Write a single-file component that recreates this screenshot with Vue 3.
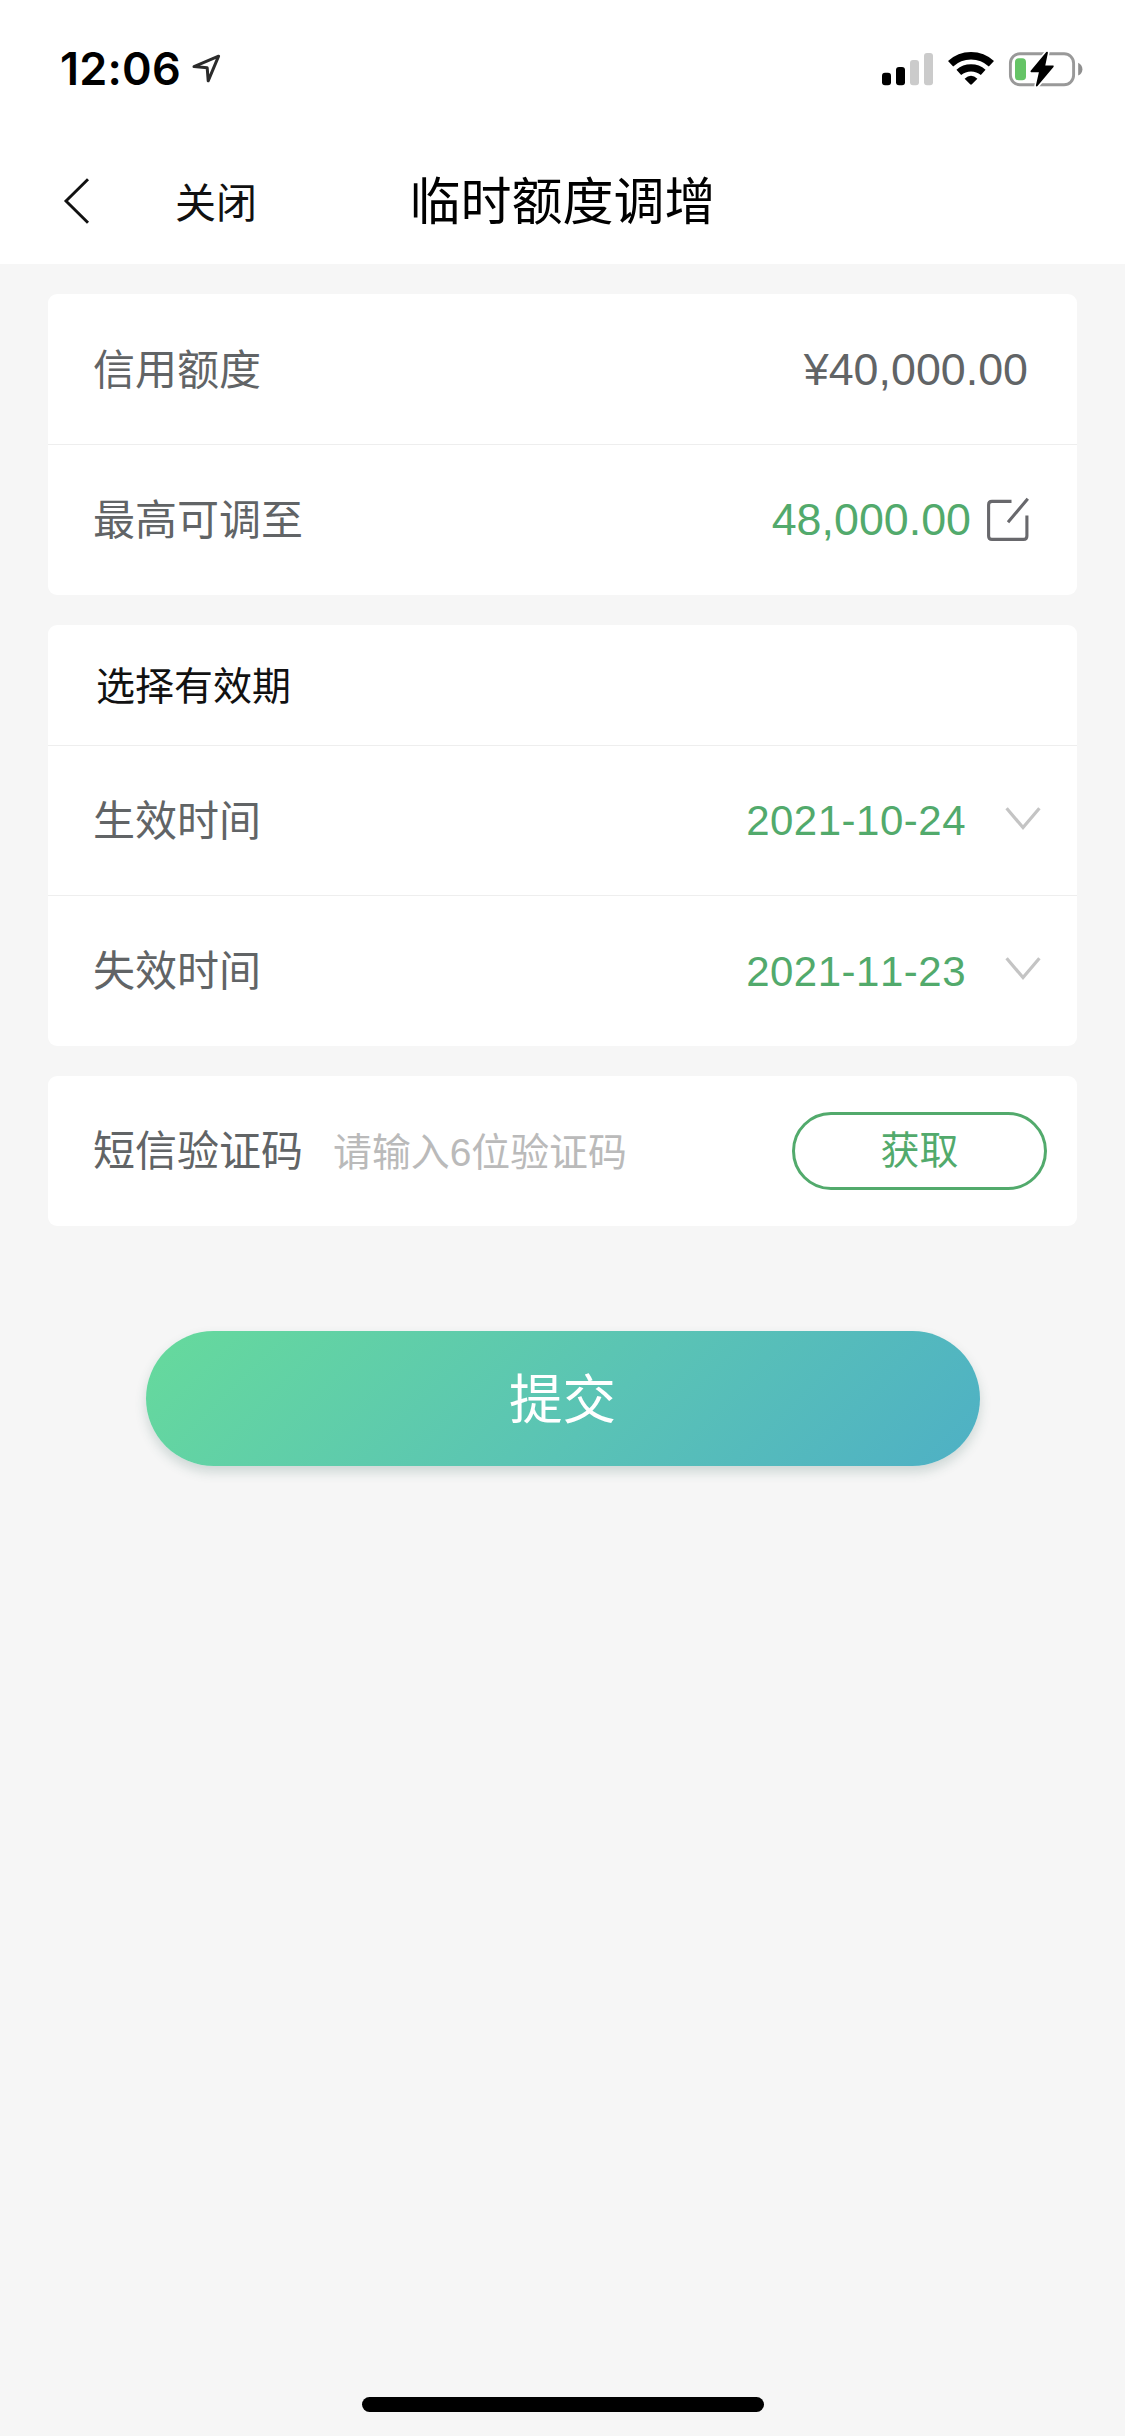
<script setup>
const limits = [
  { label: '信用额度', value: '¥40,000.00' },
  { label: '最高可调至', value: '48,000.00', editable: true },
]
const dates = [
  { label: '生效时间', value: '2021-10-24' },
  { label: '失效时间', value: '2021-11-23' },
]
</script>

<template>
  <div class="screen">
    <header class="top">
      <div class="status">
        <span class="clock">12:06</span>
        <svg class="location" width="30" height="30" viewBox="0 0 30 30">
          <path d="M2 12.6 L26.6 2.2 L16.2 26.8 L15.2 13.8 Z" fill="none" stroke="#2b2b2b" stroke-width="3" stroke-linejoin="round" />
        </svg>
        <svg class="indicators" width="205" height="38" viewBox="0 0 205 38">
          <rect x="2" y="22.7" width="9" height="12.6" rx="3" />
          <rect x="16" y="17" width="9" height="18.3" rx="3" />
          <rect x="30" y="10" width="9" height="25.3" rx="3" fill="#cbcbcb" />
          <rect x="44" y="3" width="9" height="32.3" rx="3" fill="#cbcbcb" />
          <path d="M70.6 13.8 A30 30 0 0 1 111.4 13.8" fill="none" stroke="#000" stroke-width="7.6" />
          <path d="M78.8 22.4 A18.6 18.6 0 0 1 103.2 22.4" fill="none" stroke="#000" stroke-width="7.2" />
          <path d="M84.6 28.8 Q91 22.8 97.4 28.8 L91.9 34.3 Q91 35.2 90.1 34.3 Z" />
          <rect x="130.4" y="3.8" width="63.2" height="31" rx="9.5" fill="none" stroke="#999" stroke-width="2.9" />
          <path d="M198.2 12.8 Q202.4 15 202.4 19.2 Q202.4 23.4 198.2 25.6 Z" fill="#8f8f8f" />
          <rect x="135" y="8.2" width="11" height="22" rx="3.8" fill="#65c466" />
          <path d="M167 2.5 L151.4 21.6 H160 L156.8 35.7 L172.8 16.3 H164.2 Z" stroke="#fff" stroke-width="5" stroke-linejoin="round" />
          <path d="M167 2.7 L151.4 21.4 H160 L156.8 35.5 L172.8 16.3 H164.2 Z" stroke="#000" stroke-width="1.8" stroke-linejoin="round" />
        </svg>
      </div>
      <nav class="nav">
        <svg class="back" width="27" height="48" viewBox="0 0 27 48">
          <path d="M25 2.2 L3 24 L25 45.8" fill="none" stroke="#111" stroke-width="2.9" />
        </svg>
        <span class="close">关闭</span>
        <h1 class="title">临时额度调增</h1>
      </nav>
    </header>

    <main class="content">
      <section class="card">
        <div v-for="item in limits" :key="item.label" class="row">
          <span class="label">{{ item.label }}</span>
          <span class="amount" :class="{ green: item.editable }">{{ item.value }}</span>
          <svg v-if="item.editable" class="edit" width="42" height="46" viewBox="0 0 42 46">
            <path d="M24.5 4.4 H5 Q1.6 4.4 1.6 7.8 V39 Q1.6 42.4 5 42.4 H36.5 Q39.9 42.4 39.9 39 V18.5 M40.8 1.8 L21 25.2" fill="none" stroke="#68686c" stroke-width="3.1" />
          </svg>
        </div>
      </section>

      <section class="card">
        <div class="row heading"><span>选择有效期</span></div>
        <div v-for="item in dates" :key="item.label" class="row">
          <span class="label">{{ item.label }}</span>
          <span class="date green">{{ item.value }}</span>
          <svg class="chevron" width="36" height="24" viewBox="0 0 36 24">
            <path d="M1.6 1.2 L18 20.6 L34.4 1.2" fill="none" stroke="#c4c4c4" stroke-width="3.2" />
          </svg>
        </div>
      </section>

      <section class="card">
        <div class="row">
          <span class="label">短信验证码</span>
          <span class="placeholder">请输入6位验证码</span>
          <button class="fetch">获取</button>
        </div>
      </section>

      <button class="submit">提交</button>
    </main>

    <div class="home"></div>
  </div>
</template>

<style>
body {
  margin: 0;
  background: #f6f6f6;
}
</style>

<style scoped>
.screen {
  display: flex;
  flex-direction: column;
  width: 1125px;
  height: 2436px;
  overflow: hidden;
  background: #f6f6f6;
  font-family: "Liberation Sans", "Noto Sans CJK SC", sans-serif;
  font-kerning: none;
}
.top {
  height: 264px;
  background: #fff;
}
.status {
  display: flex;
  align-items: flex-start;
  height: 132px;
  box-sizing: border-box;
  padding: 50px 40px 0 60px;
}
.clock {
  width: 132px;
  font: 600 45px/38px Inter, sans-serif;
  letter-spacing: 0.2px;
  white-space: nowrap;
}
.location {
  margin-top: 4px;
}
.indicators {
  margin-left: auto;
}
.nav {
  display: grid;
  grid-template-columns: 112px 210px 1fr 385px;
  align-items: center;
  height: 132px;
  padding-left: 63px;
  box-sizing: border-box;
}
.back {
  margin-top: 6px;
}
.close {
  margin-top: 11px;
  font-size: 41px;
  line-height: 60px;
  color: #111;
}
.title {
  margin: 10px 0 0;
  justify-self: center;
  font-size: 51px;
  line-height: 70px;
  font-weight: 400;
  white-space: nowrap;
}
.content {
  display: flex;
  flex-direction: column;
  gap: 30px;
  padding: 30px 48px 0;
}
.card {
  background: #fff;
  border-radius: 9px;
}
.row {
  display: flex;
  align-items: center;
  height: 150px;
  padding: 0 49px 0 45px;
}
.row + .row {
  height: 149.5px;
  border-top: 1px solid #eee;
}
.row.heading {
  height: 120px;
  padding-left: 48px;
  font-size: 39px;
  color: #111;
}
.heading span {
  margin-top: -3px;
}
.label {
  margin-top: -6px;
  font-size: 42px;
  color: #616466;
}
.amount,
.date {
  margin-left: auto;
  color: #616466;
}
.amount {
  font-size: 44.8px;
}
.date {
  margin-top: 2px;
  font-size: 42px;
  letter-spacing: 0.5px;
}
.amount.green,
.date.green {
  color: #52aa6c;
}
.edit {
  margin-left: 16px;
  margin-right: -1px;
}
.chevron {
  margin-left: 39px;
  margin-right: -13px;
  margin-top: -3px;
}
.placeholder {
  margin-top: -3px;
  margin-left: 30px;
  font-size: 38.9px;
  color: #bababa;
}
.fetch {
  margin-left: auto;
  margin-right: -19px;
  width: 255px;
  height: 78px;
  padding: 0;
  border: 3px solid #52aa6c;
  border-radius: 39px;
  background: #fff;
  color: #52aa6c;
  font-family: inherit;
  font-size: 39px;
  line-height: 70px;
}
.submit {
  align-self: center;
  width: 834px;
  height: 135px;
  margin-top: 75px;
  padding: 0 0 5px;
  border: 0;
  border-radius: 68px;
  background: linear-gradient(135deg, #66da9c 0%, #5ac3b5 55%, #4eb0c5 100%);
  box-shadow: 0 6px 12px rgba(40, 90, 80, 0.2);
  color: #fff;
  font-family: inherit;
  font-size: 53.5px;
}
.home {
  width: 402px;
  height: 15px;
  margin: auto auto 24px;
  border-radius: 8px;
  background: #000;
}
</style>
